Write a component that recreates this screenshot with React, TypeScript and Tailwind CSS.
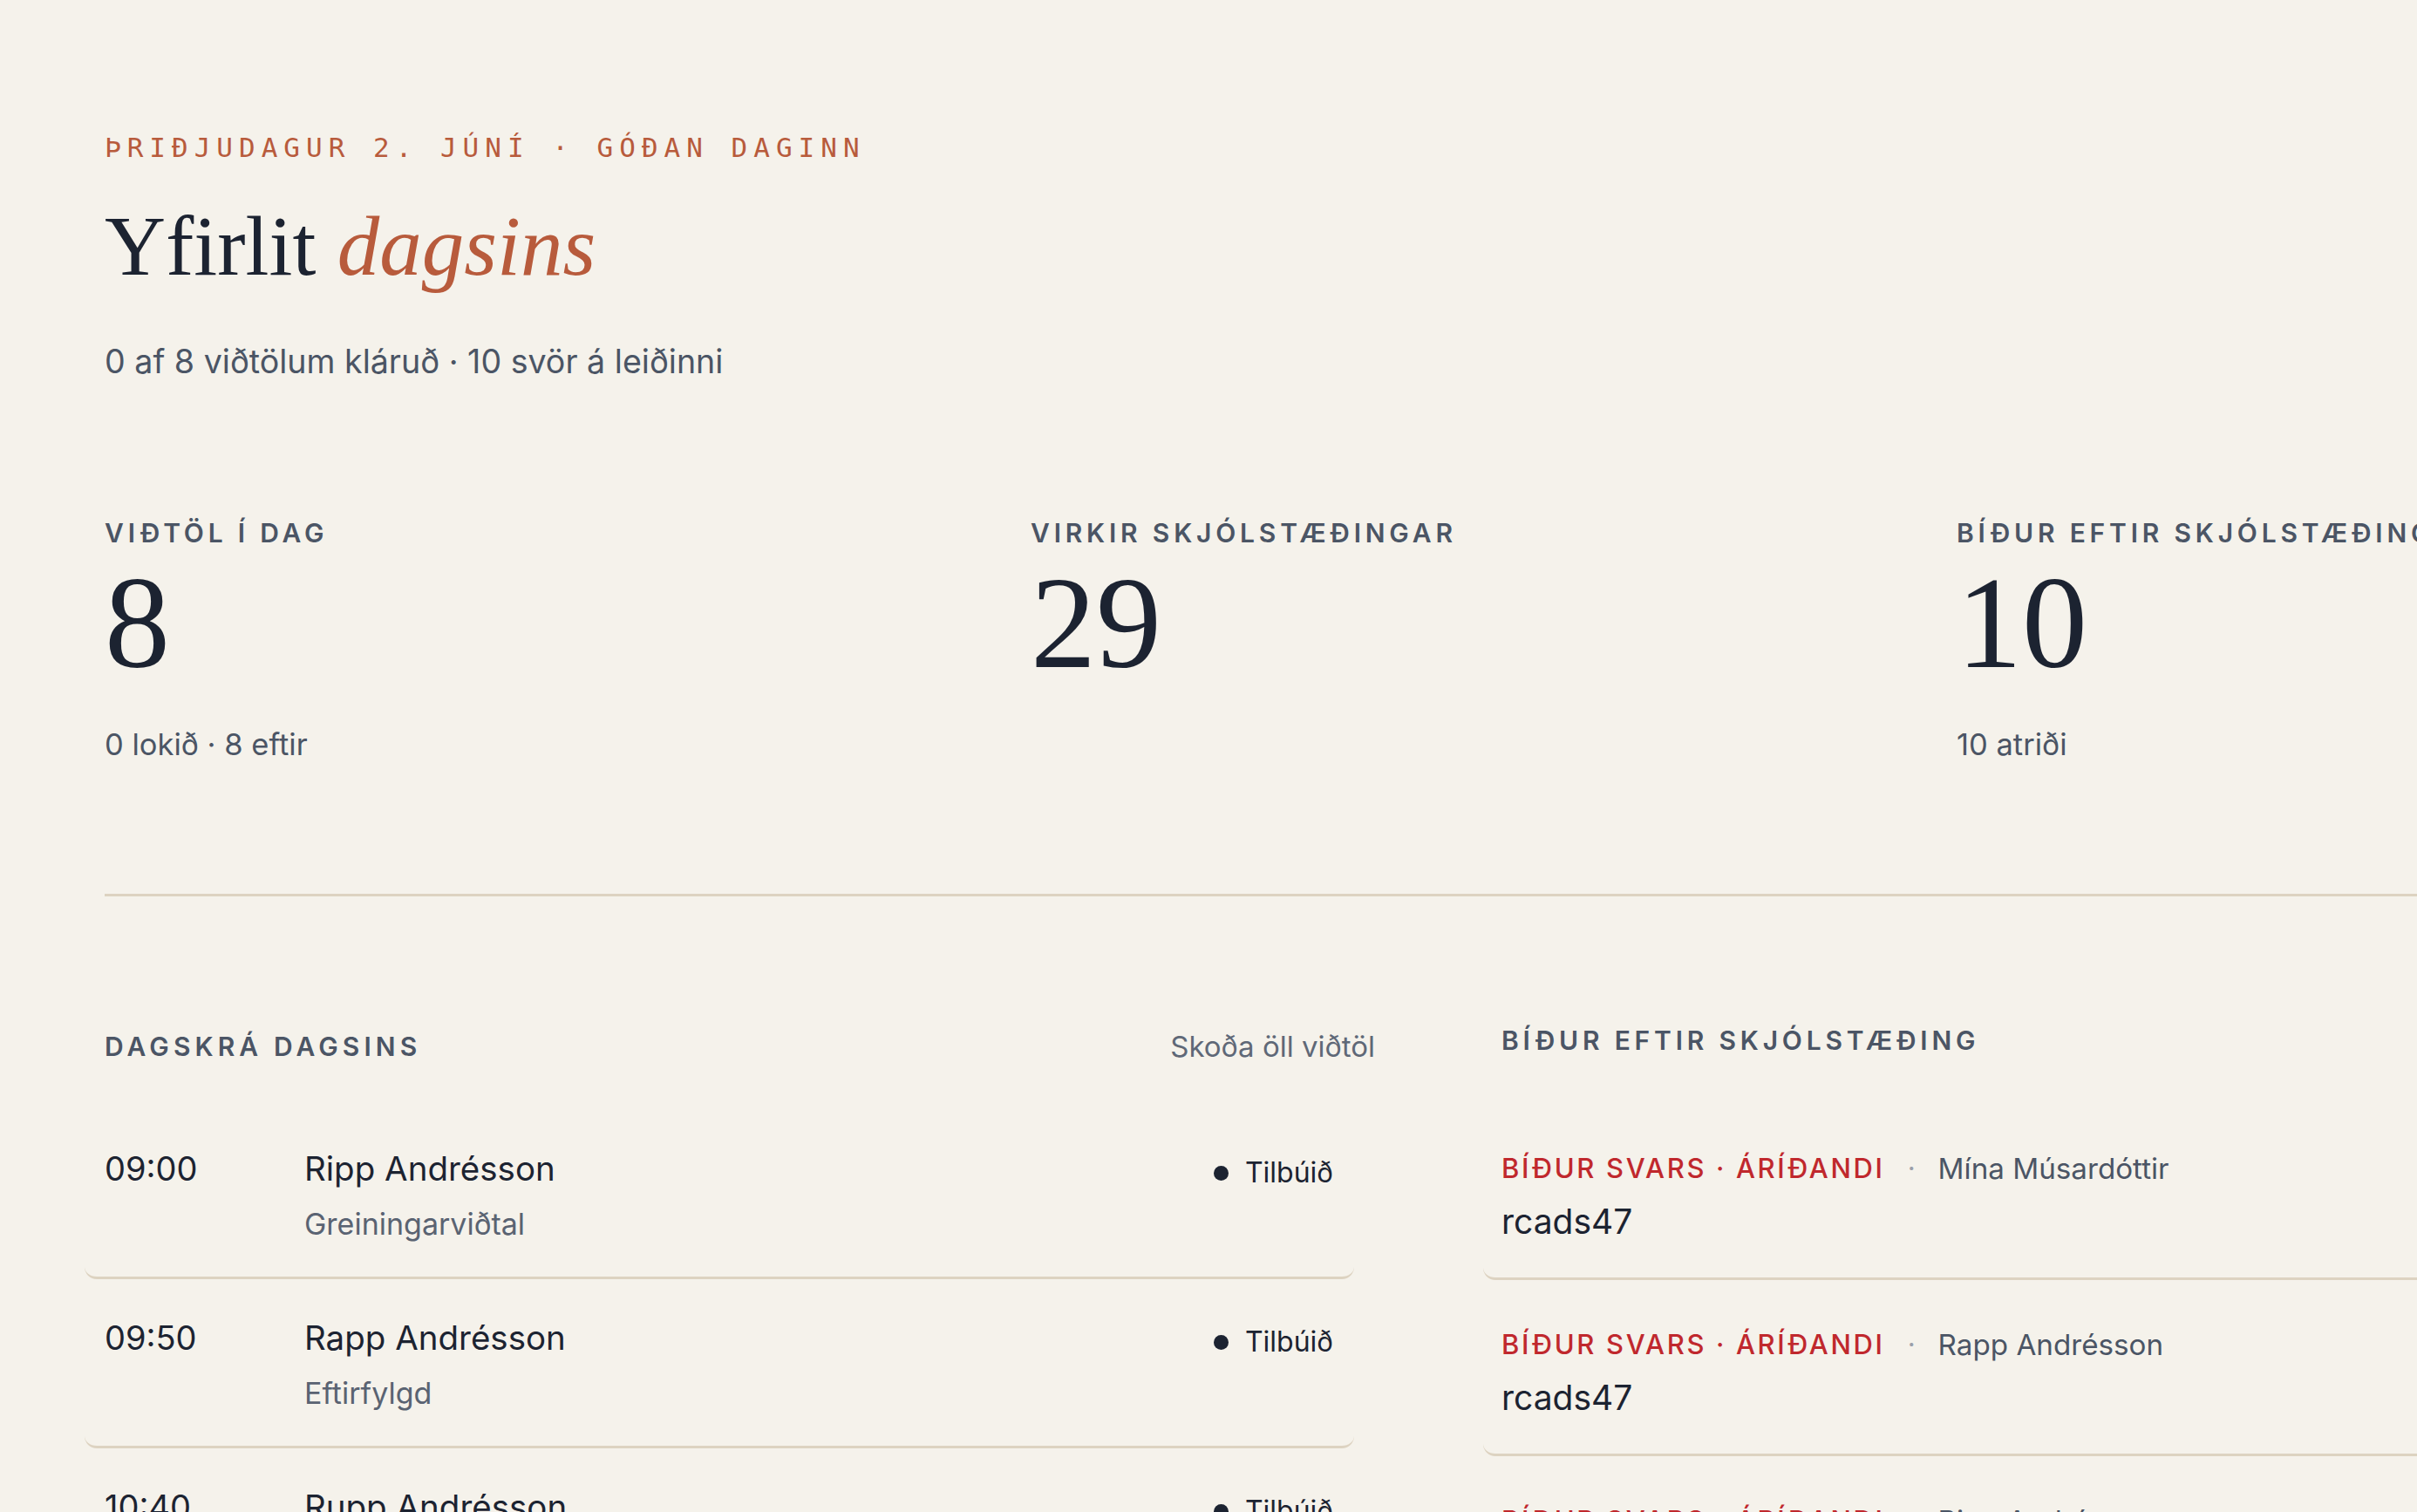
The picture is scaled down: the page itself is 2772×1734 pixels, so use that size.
// Daily overview dashboard (Yfirlit dagsins)

const stats = [
    { label: "Viðtöl í dag", value: "8", sub: "0 lokið · 8 eftir" },
    { label: "Virkir skjólstæðingar", value: "29", sub: "" },
    { label: "Bíður eftir skjólstæðingum", value: "10", sub: "10 atriði" },
];

const schedule = [
    { time: "09:00", name: "Ripp Andrésson", type: "Greiningarviðtal", status: "Tilbúið" },
    { time: "09:50", name: "Rapp Andrésson", type: "Eftirfylgd", status: "Tilbúið" },
    { time: "10:40", name: "Rupp Andrésson", type: "Greiningarviðtal", status: "Tilbúið" },
];

const waiting = [
    { tag: "Bíður svars · Áríðandi", client: "Mína Músardóttir", code: "rcads47" },
    { tag: "Bíður svars · Áríðandi", client: "Rapp Andrésson", code: "rcads47" },
    { tag: "Bíður svars · Áríðandi", client: "Ripp Andrésson", code: "rcads47" },
];

export default function App() {
    return (
        <div className="w-[2772px] h-[1734px] overflow-hidden bg-[#f5f2eb] font-['Inter','Noto_Sans',sans-serif] text-[#1c2331]">
            <div className="w-[3306px] pl-[120px] pt-[149px]">
                {/* Header */}
                <p className="font-['DejaVu_Sans_Mono','Liberation_Mono',monospace] text-[31px] leading-[40px] tracking-[7px] text-[#b85b3c] uppercase">
                    Þriðjudagur 2. júní · Góðan daginn
                </p>
                <h1 className="mt-[45px] font-['Liberation_Serif','Times_New_Roman',serif] text-[97px] leading-none text-[#1c2331]">
                    Yfirlit <em className="italic text-[#b85b3c]">dagsins</em>
                </h1>
                <p className="mt-[60px] text-[37.6px] leading-[48px] text-[#4b5565]">
                    0 af 8 viðtölum kláruð · 10 svör á leiðinni
                </p>

                {/* Stats */}
                <div className="mt-[154px] grid grid-cols-3 w-[3186px]">
                    {stats.map((s) => (
                        <div key={s.label}>
                            <p className="text-[30px] leading-[36px] font-semibold uppercase tracking-[0.16em] text-[#4b5565] whitespace-nowrap">
                                {s.label}
                            </p>
                            <p className="mt-[10px] font-['Liberation_Serif','Times_New_Roman',serif] text-[150px] leading-none text-[#1c2331]">
                                {s.value}
                            </p>
                            {s.sub && (
                                <p className="mt-[43px] text-[34.5px] leading-[44px] text-[#4b5565]">{s.sub}</p>
                            )}
                        </div>
                    ))}
                </div>

                <div className="mt-[149px] h-[3px] w-[3186px] bg-[#ddd3c1]" />

                {/* Lower section */}
                <div className="mt-[147px] grid grid-cols-[1457px_1584px] gap-x-[145px]">
                    {/* Schedule */}
                    <section>
                        <div className="flex items-center justify-between h-[50px]">
                            <h2 className="text-[30px] leading-[36px] font-semibold uppercase tracking-[0.17em] text-[#4b5565]">
                                Dagskrá dagsins
                            </h2>
                            <a className="text-[33px] leading-[50px] text-[#5f6877]">Skoða öll viðtöl</a>
                        </div>
                        <div className="mt-[48px]">
                            {schedule.map((row) => (
                                <div
                                    key={row.time}
                                    className="ml-[-23px] mr-[24px] pl-[23px] pr-[24px] pt-[42px] pb-[38px] rounded-[14px] border-b-[3px] border-[#ddd3c1] flex items-start"
                                >
                                    <div className="w-[229px] shrink-0 text-[38px] leading-[50px] text-[#1c2331]">
                                        {row.time}
                                    </div>
                                    <div className="flex-1">
                                        <p className="text-[38.5px] leading-[50px] text-[#1c2331]">{row.name}</p>
                                        <p className="mt-[17px] text-[34px] leading-[44px] text-[#5a6372]">{row.type}</p>
                                    </div>
                                    <div className="mt-[5px] flex items-center gap-[19px] h-[50px] text-[32px] text-[#1c2331]">
                                        <span className="w-[17px] h-[17px] rounded-full bg-[#1c2331]" />
                                        {row.status}
                                    </div>
                                </div>
                            ))}
                        </div>
                    </section>

                    {/* Waiting on client */}
                    <section>
                        <h2 className="text-[30px] leading-[36px] font-semibold uppercase tracking-[0.16em] text-[#4b5565]">
                            Bíður eftir skjólstæðing
                        </h2>
                        <div className="mt-[55px]">
                            {waiting.map((w, i) => (
                                <div
                                    key={i}
                                    className="ml-[-21px] pl-[21px] pt-[54px] pb-[38px] rounded-[14px] border-b-[3px] border-[#ddd3c1]"
                                >
                                    <div className="flex items-center gap-[26px] text-[31px] leading-[40px] whitespace-nowrap">
                                        <span className="uppercase font-medium tracking-[0.085em] text-[#c0282d]">{w.tag}</span>
                                        <span className="text-[#9aa0aa]">·</span>
                                        <span className="text-[33.2px] text-[#4b5565]">{w.client}</span>
                                    </div>
                                    <p className="mt-[15px] text-[39px] leading-[52px] text-[#1c2331]">{w.code}</p>
                                </div>
                            ))}
                        </div>
                    </section>
                </div>
            </div>
        </div>
    );
}
